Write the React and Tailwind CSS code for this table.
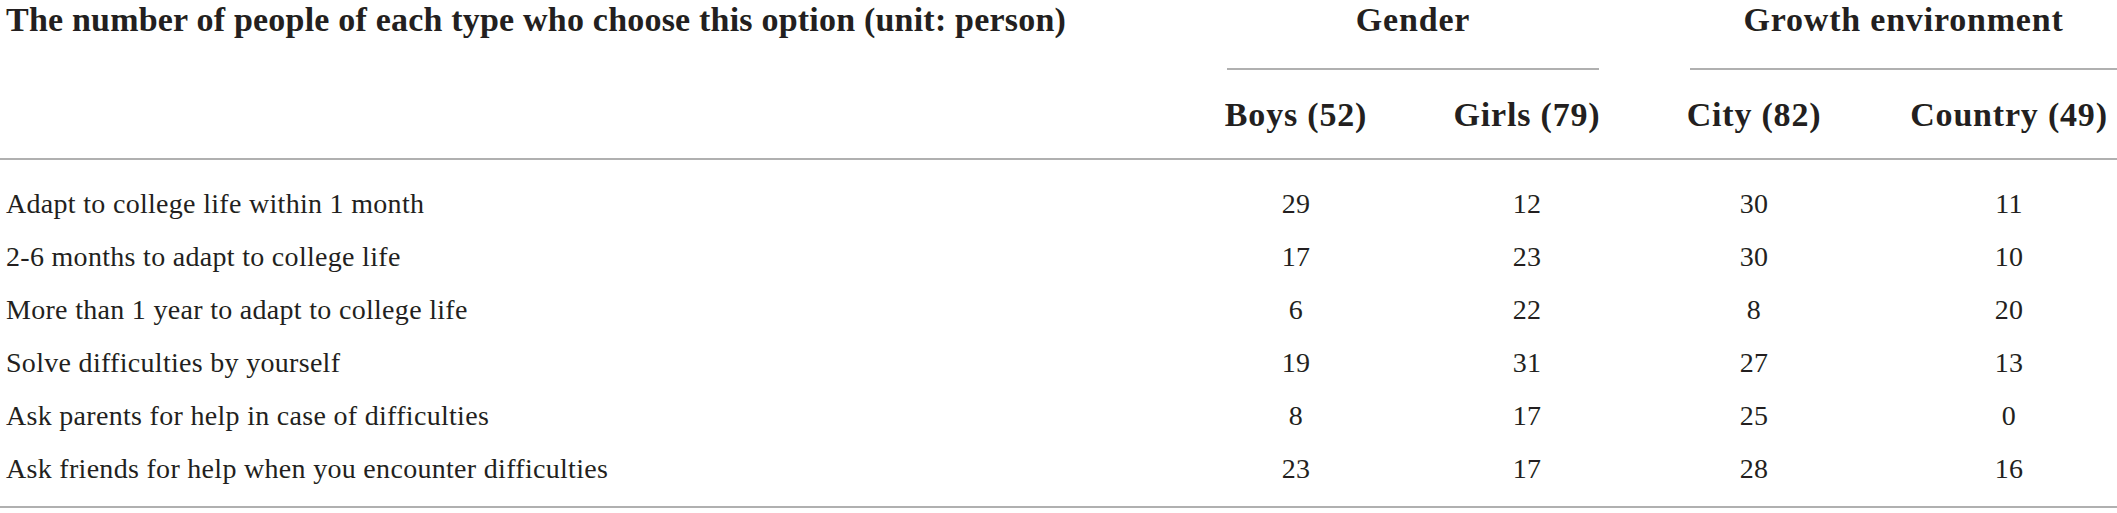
const rows = [
  ["Adapt to college life within 1 month", 29, 12, 30, 11],
  ["2-6 months to adapt to college life", 17, 23, 30, 10],
  ["More than 1 year to adapt to college life", 6, 22, 8, 20],
  ["Solve difficulties by yourself", 19, 31, 27, 13],
  ["Ask parents for help in case of difficulties", 8, 17, 25, 0],
  ["Ask friends for help when you encounter difficulties", 23, 17, 28, 16],
];

const cols = "grid grid-cols-[1145px_302px_160px_294px_216px]";

function App() {
  return (
    <div className="w-[2117px] bg-white text-[#231f20] font-['Liberation_Serif',serif]">
      {/* header */}
      <div className={`${cols} border-b-2 border-[#b0b0b0] font-bold text-[34px] tracking-[0.8px]`}>
        <div className="h-[70px] pl-[6px] leading-[40px] whitespace-nowrap tracking-[0.2px]">
          The number of people of each type who choose this option (unit: person)
        </div>
        <div className="col-span-2 pl-[82px] pr-[8px]">
          <div className="h-[70px] border-b-2 border-[#b0b0b0] text-center leading-[40px]">Gender</div>
        </div>
        <div className="col-span-2 pl-[83px]">
          <div className="h-[70px] border-b-2 border-[#b0b0b0] text-center leading-[40px]">Growth environment</div>
        </div>

        <div />
        <div className="pt-[25px] pb-[23px] text-center leading-[40px]">Boys (52)</div>
        <div className="pt-[25px] pb-[23px] text-center leading-[40px]">Girls (79)</div>
        <div className="pt-[25px] pb-[23px] text-center leading-[40px]">City (82)</div>
        <div className="pt-[25px] pb-[23px] text-center leading-[40px]">Country (49)</div>
      </div>

      {/* body */}
      <div className="pt-[17px] pb-[11px] border-b-2 border-[#b0b0b0] text-[28px] tracking-[0.3px]">
        {rows.map((r) => (
          <div key={r[0]} className={`${cols} h-[53px] leading-[53px]`}>
            <div className="pl-[6px] whitespace-nowrap">{r[0]}</div>
            {r.slice(1).map((n, i) => (
              <div key={i} className="text-center">{n}</div>
            ))}
          </div>
        ))}
      </div>
    </div>
  );
}

export default App;
